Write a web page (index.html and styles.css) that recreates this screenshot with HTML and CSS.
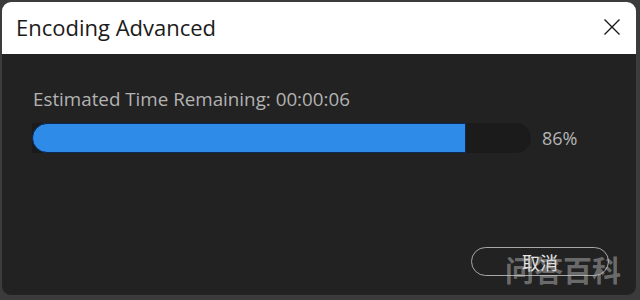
FILE: index.html
```html
<!DOCTYPE html>
<html>
<head>
<meta charset="utf-8">
<link rel="stylesheet" href="styles.css">
</head>
<body>
<div class="window">
  <div class="titlebar">
    <span class="title">Encoding Advanced</span>
    <svg class="close" width="18" height="18" viewBox="0 0 18 18"><path d="M1.5 1.5 L16.5 16.5 M16.5 1.5 L1.5 16.5" stroke="#1a1a1a" stroke-width="1.4" fill="none"/></svg>
  </div>
  <div class="body">
    <div class="label">Estimated Time Remaining: 00:00:06</div>
    <div class="progress-row">
      <div class="track"><div class="fill" style="width:87%"></div></div>
      <span class="pct">86%</span>
    </div>
    <div class="footer">
      <button class="cancel">取消</button>
    </div>
  </div>
  <div class="watermark">问答百科</div>
</div>
</body>
</html>
```
FILE: styles.css
```css
html, body {
  margin: 0;
  padding: 0;
  background: #3b3b3b;
  width: 640px;
  height: 300px;
  overflow: hidden;
}
.window {
  position: relative;
  box-sizing: border-box;
  width: 636px;
  height: 295px;
  margin: 1px 0 0 1px;
  border-radius: 10px;
  overflow: hidden;
  background: #222222;
  border: 1px solid #3d3d3d;
  display: flex;
  flex-direction: column;
  font-family: "Open Sans", "Noto Sans", sans-serif;
}
.titlebar {
  height: 52px;
  flex: none;
  background: #ffffff;
  display: flex;
  align-items: center;
  justify-content: space-between;
  padding: 0 15px 0 14px;
}
.title {
  font-size: 22px;
  color: #1b1b1b;
  margin-top: -3px;
}
.close {
  display: block;
  margin-top: -3px;
}
.body {
  flex: 1;
  display: flex;
  flex-direction: column;
  padding: 35px 0 0 30px;
}
.label {
  font-size: 18.8px;
  color: #b3b3b3;
  line-height: 20px;
  margin-left: 1px;
}
.progress-row {
  display: flex;
  align-items: center;
  margin-top: 14px;
}
.track {
  width: 499px;
  height: 30px;
  background: #1b1b1b;
  border-radius: 0 15px 15px 0;
  display: flex;
}
.fill {
  box-sizing: border-box;
  height: 30px;
  background: #2e8be8;
  border: 1px solid #0c2a55;
  border-radius: 15px 0 0 15px;
}
.pct {
  margin-left: 11px;
  font-size: 18px;
  color: #b5b5b5;
}
.footer {
  margin-top: auto;
  display: flex;
  justify-content: flex-end;
  padding: 0 27px 19px 0;
}
.cancel {
  width: 138px;
  height: 29px;
  border: 1.5px solid #a8a8a8;
  border-radius: 15px;
  background: transparent;
  color: #e6e6e6;
  font-family: "Noto Sans CJK SC", sans-serif;
  font-size: 18px;
  padding: 0;
}
.watermark {
  position: absolute;
  left: 503px;
  top: 246px;
  font-family: "Noto Sans CJK SC", sans-serif;
  font-size: 29px;
  font-weight: bold;
  color: rgba(200, 200, 200, 0.45);
  pointer-events: none;
}
```
